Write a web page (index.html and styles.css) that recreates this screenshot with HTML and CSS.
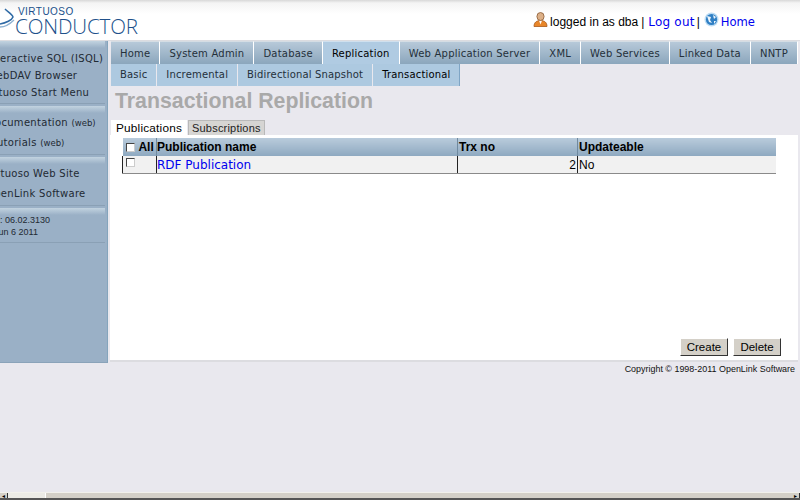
FILE: index.html
```html
<!DOCTYPE html>
<html lang="en">
<head>
<meta charset="utf-8">
<title>Virtuoso Conductor</title>
<link rel="stylesheet" href="styles.css">
</head>
<body>
<div class="page">
  <header class="header">
    <div class="logo">
      <svg class="logo-mark" width="18" height="30" viewBox="0 0 18 30"><path d="M5 2 C8 5 12 7 13 10 C12 13 6 16 0 17" fill="none" stroke="#2f6aa5" stroke-width="1.5"/><path d="M0 20 C5 20 9 18 14 13" fill="none" stroke="#8fb2d2" stroke-width="1.3"/></svg>
      <div class="logo-text"><span class="logo-small">VIRTUOSO</span><span class="logo-big">CONDUCTOR</span></div>
    </div>
    <div class="user">
      <svg class="icon-user" width="15" height="15" viewBox="0 0 15 15"><path d="M1 14.5 C1 10.5 3.5 8.5 7.5 8.5 C11.5 8.5 14 10.5 14 14.5 Z" fill="#e8862a" stroke="#a8591c" stroke-width="0.8"/><path d="M6 8.5 h3 l-1.5 4 z" fill="#fff"/><ellipse cx="7.5" cy="4.5" rx="3.6" ry="4" fill="#dcb088" stroke="#8a5a34" stroke-width="0.8"/></svg>
      <span class="user-text">logged in as dba</span>
      <span class="user-text sep-a">|</span>
      <a class="link link-out" href="#">Log out</a>
      <span class="user-text sep-b">|</span>
      <svg class="icon-globe" width="15" height="15" viewBox="0 0 15 15"><circle cx="7.5" cy="7.5" r="7" fill="#bcdcf4"/><circle cx="7.5" cy="7.5" r="5.6" fill="#2f7fc4"/><path d="M3 4 L7 5 L6 8 L8 11 L5 10 Z M9 3 L12 5 L10 7 Z M10 9 L12 9 L10 12 Z" fill="#eef6fc"/></svg>
      <a class="link link-home" href="#">Home</a>
    </div>
  </header>

  <div class="main">
    <nav class="side">
      <div class="side-group g-first">
        <a class="side-item off-14">Interactive SQL (ISQL)</a>
        <a class="side-item off-13">WebDAV Browser</a>
        <a class="side-item off-16">Virtuoso Start Menu</a>
      </div>
      <div class="side-group g-wide">
        <a class="side-item off-13">Documentation <small>(web)</small></a>
        <a class="side-item off-8">Tutorials <small>(web)</small></a>
      </div>
      <div class="side-group g-wide">
        <a class="side-item off-14">Virtuoso Web Site</a>
        <a class="side-item off-14">OpenLink Software</a>
      </div>
      <div class="side-group side-info">
        <div class="info-a">Version: 06.02.3130</div>
        <div class="info-b">Build: Jun 6 2011</div>
      </div>
    </nav>

    <div class="content">
      <div class="tabs tabs-top">
        <a class="tab">Home</a><a class="tab">System Admin</a><a class="tab">Database</a><a class="tab active">Replication</a><a class="tab">Web Application Server</a><a class="tab">XML</a><a class="tab">Web Services</a><a class="tab">Linked Data</a><a class="tab">NNTP</a>
      </div>
      <div class="tabs tabs-sub">
        <a class="tab">Basic</a><a class="tab">Incremental</a><a class="tab">Bidirectional Snapshot</a><a class="tab current">Transactional</a>
      </div>
      <h1 class="title">Transactional Replication</h1>
      <div class="ptabs">
        <span class="ptab on">Publications</span><span class="ptab">Subscriptions</span>
      </div>
      <div class="panel">
        <table class="grid">
          <thead>
            <tr><th class="c-check"><span class="box"></span> All</th><th class="c-name">Publication name</th><th class="c-trx">Trx no</th><th>Updateable</th></tr>
          </thead>
          <tbody>
            <tr><td class="c-check"><span class="box box-row"></span></td><td class="c-name"><a class="pub" href="#">RDF Publication</a></td><td class="c-trx num">2</td><td>No</td></tr>
          </tbody>
        </table>
        <div class="actions">
          <button class="btn">Create</button>
          <button class="btn">Delete</button>
        </div>
      </div>
    </div>
  </div>

  <div class="copy">Copyright © 1998-2011 OpenLink Software</div>
  <div class="spacer"></div>
  <div class="hbar">
    <span class="hbtn">◂</span><span class="htrough"></span><span class="hthumb"></span><span class="hbtn">▸</span>
  </div>
</div>
</body>
</html>
```
FILE: styles.css
```css
* { box-sizing: border-box; }
html, body { margin: 0; padding: 0; }
body { background: #e9e8ee; font-family: "DejaVu Sans", sans-serif; color: #000; }
.page { width: 800px; height: 500px; overflow: hidden; display: flex; flex-direction: column; }

.header { height: 41px; flex: none; display: flex; justify-content: space-between; background: linear-gradient(#d8d8d8 0, #f4f4f4 3px, #fff 14px); border-bottom: 1px solid #dcdce0; }
.logo { display: flex; align-items: flex-start; padding-top: 6px; }
.logo-mark { flex: none; margin-top: 1px; margin-right: -3px; }
.logo-text { display: flex; flex-direction: column; color: #20508a; margin-top: 1px; }
.logo-small { font-family: "Liberation Sans", sans-serif; font-size: 10px; line-height: 10px; letter-spacing: 0.45px; padding-left: 3px; }
.logo-big { font-family: "Open Sans", sans-serif; font-weight: 300; font-size: 20.6px; line-height: 19px; letter-spacing: -0.15px; }
.user { display: flex; align-items: center; height: 40px; padding: 3px 45px 0 0; }
.user-text { font-family: "Liberation Sans", sans-serif; font-size: 12px; margin-left: 2px; }
.sep-a { margin-left: 3px; }
.sep-b { margin-left: 2px; }
.icon-user { margin-top: -5px; }
.icon-globe { margin-top: -5px; margin-left: 4px; margin-right: 2px; }
.link { font-size: 12px; color: #0000ee; text-decoration: none; }
.link-out { margin-left: 4px; letter-spacing: 0.2px; }
.link-home { font-size: 11.6px; }

.main { display: flex; height: 322px; flex: none; }
.side { width: 108px; flex: none; overflow: hidden; background: #9ab0c6; border-right: 1px solid #84a4bc; border-bottom: 1px solid #8aa3b9; font-size: 10px; color: #1f2a33; }
.side-group { margin: 0 2px 2px 0; background: linear-gradient(#c2d3e0, #9ab0c6 7px); border-bottom: 1px solid #8aa0b5; overflow: hidden; }
.g-first { height: 63px; padding-top: 9px; }
.g-first .side-item { height: 17px; line-height: 17px; }
.g-wide { height: 49px; padding-top: 7px; }
.side-item { display: block; height: 20px; line-height: 20px; white-space: nowrap; letter-spacing: 0.3px; }
.side-item small { font-size: 8.5px; letter-spacing: 0; }
.off-16 { margin-left: -16px; }
.off-14 { margin-left: -14px; }
.off-13 { margin-left: -13px; }
.off-8 { margin-left: -8px; }
.side-info { height: 35px; padding-top: 6px; font-family: "Liberation Sans", sans-serif; font-size: 9px; line-height: 12px; white-space: nowrap; }
.info-a { margin-left: -30px; }
.info-b { margin-left: -31px; }

.content { flex: 1; min-width: 0; overflow: hidden; padding-left: 3px; }
.tabs { display: flex; white-space: nowrap; }
.tab { flex: none; font-size: 10px; color: #24303a; padding: 0 9px; border-right: 1px solid #fff; }
.tabs-top { height: 23px; }
.tabs-top .tab { height: 23px; line-height: 23px; letter-spacing: 0.22px; background: linear-gradient(#b7c9d9, #8ba6bc); border-top: 1px solid #d5dde4; }
.tabs-top .tab.active { background: #b0cbe2; color: #000; border-top: 1px solid #d0e0ee; }
.tabs-sub { height: 22px; }
.tabs-sub .tab { height: 22px; line-height: 21px; letter-spacing: 0.17px; background: #adc9e0; border-right: 1px solid #e9e8ee; }
.tabs-sub .tab.current { color: #000; border-right: 1px solid #7fa5c5; }

.title { margin: 3px 0 0 4px; height: 31px; font-family: "Liberation Sans", sans-serif; font-weight: bold; font-size: 21.3px; line-height: 24px; color: #a9a9a9; }

.ptabs { display: flex; height: 15px; align-items: flex-end; }
.ptab { font-family: "Liberation Sans", sans-serif; font-size: 11px; height: 15px; line-height: 14px; padding: 0 3px; background: #d6d5d3; border: 1px solid #b9b9b9; border-bottom: 0; color: #222; letter-spacing: 0.2px; }
.ptab.on { font-size: 11.8px; background: #fff; border-color: #fff; padding: 0 4px; color: #000; margin-right: 1px; }

.panel { width: 688px; height: 227px; margin-left: -1px; background: #fff; padding: 3px 0 0 12px; border-bottom: 2px solid #dcdce0; display: flex; flex-direction: column; }
.grid { width: 654px; border-collapse: collapse; table-layout: fixed; font-family: "Liberation Sans", sans-serif; font-size: 12px; }
.grid th { height: 18px; padding: 0 1px; text-align: left; font-weight: bold; background: linear-gradient(#b9cbdb, #8ea9c0); border-right: 1px solid #6f8aa0; white-space: nowrap; }
.grid th:last-child, .grid td:last-child { border-right: 0; }
.grid td { height: 17px; padding: 1px 1px 0; background: #f1f1f1; border-bottom: 1px solid #8a8a8a; border-right: 1px solid #222; }
.grid td:first-child { border-left: 1px solid #222; }
.grid .c-name { padding-left: 0; }
.grid .c-check { padding-left: 3px; }
.c-check { width: 34px; }
.c-name { width: 301px; }
.c-trx { width: 120px; }
.num { text-align: right; }
.box { display: inline-block; width: 9px; height: 9px; margin-right: 1px; background: #fff; border: 1px solid #555; border-color: #444 #ccc #ccc #444; vertical-align: -1px; }
.box-row { margin-bottom: 3px; }
.pub { font-family: "DejaVu Sans", sans-serif; font-size: 12px; color: #0000ee; text-decoration: none; }

.actions { margin-top: auto; display: flex; justify-content: flex-end; gap: 5px; padding: 0 17px 4px 0; }
.btn { width: 48px; height: 18px; padding: 0; font-family: "Liberation Sans", sans-serif; font-size: 11.5px; color: #000; background: #d4d0c8; border: 1px solid; border-color: #fff #333 #333 #fff; border-radius: 0; }

.copy { height: 14px; flex: none; text-align: right; padding-right: 5px; font-family: "Liberation Sans", sans-serif; font-size: 8.95px; line-height: 13px; color: #111; }
.spacer { flex: 1; }
.hbar { height: 8px; flex: none; display: flex; background: #d4d0c8; border-top: 1px solid #f2f1ec; border-bottom: 2px solid #555; }
.hbtn { width: 8px; flex: none; font-size: 6px; line-height: 5px; text-align: center; background: #d4d0c8; border-right: 1px solid #333; overflow: hidden; color: #000; }
.htrough { width: 37px; flex: none; background: #ecebe6; }
.hthumb { flex: 1; background: #d4d0c8; border-left: 1px solid #fff; }
```
